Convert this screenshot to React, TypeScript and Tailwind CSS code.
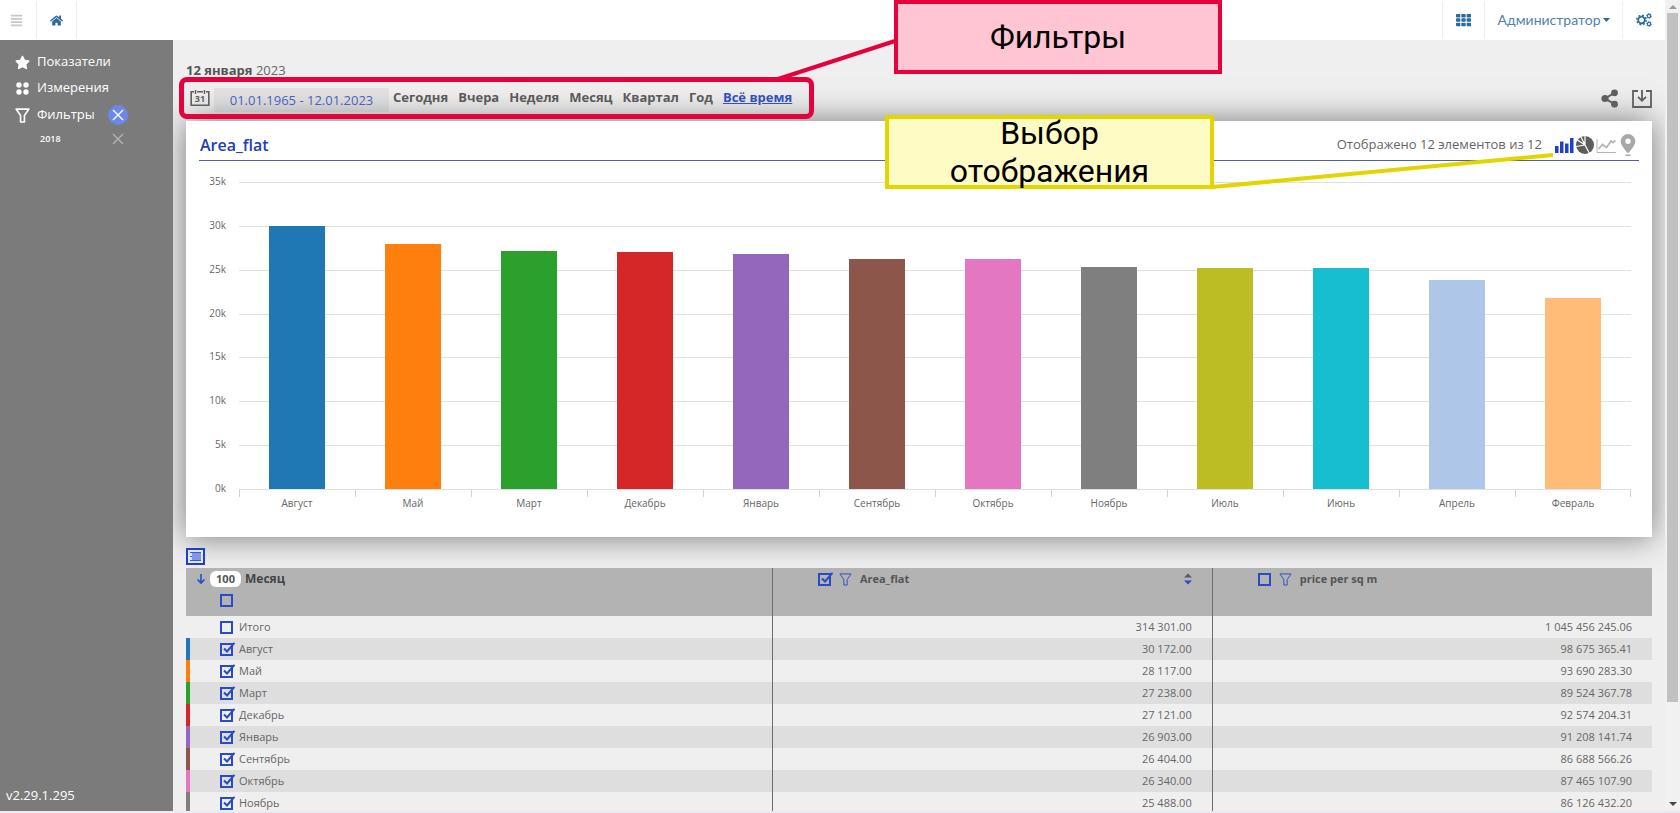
import { useState, type ReactNode } from "react";
import { FaAlignJustify, FaHome, FaStar, FaTh } from "react-icons/fa";

type Row = {
  name: string;
  color: string;
  value: number;
  area: string;
  price: string;
};

const rows: Row[] = [
  { name: "Август", color: "#1f77b4", value: 30172, area: "30 172.00", price: "98 675 365.41" },
  { name: "Май", color: "#ff7f0e", value: 28117, area: "28 117.00", price: "93 690 283.30" },
  { name: "Март", color: "#2ca02c", value: 27238, area: "27 238.00", price: "89 524 367.78" },
  { name: "Декабрь", color: "#d62728", value: 27121, area: "27 121.00", price: "92 574 204.31" },
  { name: "Январь", color: "#9467bd", value: 26903, area: "26 903.00", price: "91 208 141.74" },
  { name: "Сентябрь", color: "#8c564b", value: 26404, area: "26 404.00", price: "86 688 566.26" },
  { name: "Октябрь", color: "#e377c2", value: 26340, area: "26 340.00", price: "87 465 107.90" },
  { name: "Ноябрь", color: "#7f7f7f", value: 25488, area: "25 488.00", price: "86 126 432.20" },
];

const bars = [
  ...rows,
  { name: "Июль", color: "#bcbd22", value: 25300 },
  { name: "Июнь", color: "#17becf", value: 25290 },
  { name: "Апрель", color: "#aec7e8", value: 24000 },
  { name: "Февраль", color: "#ffbb78", value: 21900 },
];

const ticks = ["35k", "30k", "25k", "20k", "15k", "10k", "5k", "0k"];
const axisMax = 35200;
const periods = ["Сегодня", "Вчера", "Неделя", "Месяц", "Квартал", "Год", "Всё время"];

function FunnelIcon({ className }: { className: string }) {
  return (
    <svg viewBox="0 0 14 14" className={className} fill="none" stroke="currentColor" strokeLinejoin="round">
      <path d="M1 1h12L8.8 7v6H5.2V7z" />
    </svg>
  );
}

function CrossIcon() {
  return (
    <svg viewBox="0 0 12 12" className="size-3" fill="none" stroke="currentColor" strokeWidth="1.4">
      <path d="M1 1l10 10M11 1L1 11" />
    </svg>
  );
}

function CogsIcon() {
  return (
    <svg viewBox="0 0 16 14" className="h-[14px] w-4" fill="none" stroke="currentColor">
      <circle cx="5.500" cy="7" r="3.300" strokeWidth="1.800" />
      <circle cx="5.500" cy="7" r="4.700" strokeWidth="1.500" strokeDasharray="1.850 1.850" />
      <circle cx="13" cy="3" r="1.700" strokeWidth="1.200" />
      <circle cx="13" cy="3" r="2.500" strokeWidth=".8" strokeDasharray="1.300 1.300" />
      <circle cx="13" cy="11" r="1.700" strokeWidth="1.200" />
      <circle cx="13" cy="11" r="2.500" strokeWidth=".8" strokeDasharray="1.300 1.300" />
    </svg>
  );
}

function CalendarIcon() {
  return (
    <svg viewBox="0 0 20 18" className="h-[18px] w-5 shrink-0 text-[#5f5f5f]" fill="none" stroke="currentColor">
      <path d="M4 2.8H1.2v13.4h17.6V2.8H16" strokeWidth="1.6" />
      <path d="M5.5 1v4M14.5 1v4M7 2.800h6" strokeWidth="1.4" />
      <text x="10" y="13" textAnchor="middle" fontSize="9" fontWeight="700" fill="currentColor" stroke="none">
        31
      </text>
    </svg>
  );
}

function ShareIcon() {
  return (
    <svg viewBox="0 0 18 19" className="h-[19px] w-[18px]" fill="currentColor">
      <path d="M13.500 3.800L4 9.500l9.500 5.700" fill="none" stroke="currentColor" strokeWidth="2" />
      <circle cx="13.500" cy="3.800" r="3.400" />
      <circle cx="4" cy="9.500" r="3.600" />
      <circle cx="13.500" cy="15.200" r="3.400" />
    </svg>
  );
}

function DownloadIcon() {
  return (
    <svg viewBox="0 0 20 18" className="h-[18px] w-5" fill="none" stroke="currentColor" strokeWidth="1.800">
      <path d="M6 1H1v16h18V1h-5" />
      <path d="M10 0v10.500M6 6.800l4 4 4-4" />
    </svg>
  );
}

function BarsIcon() {
  return (
    <svg viewBox="0 0 20 18" className="h-[18px] w-5 text-[#1f3fc4]" fill="currentColor">
      <path d="M1 10h3.500v7H1zM6 5.500h3.500V17H6zM11 7.500h3.500V17H11zM16 2h3.500v15H16z" />
    </svg>
  );
}

function PieIcon() {
  return (
    <svg viewBox="0 0 18 18" className="size-[18px] text-[#5c5c5c]">
      <circle cx="9" cy="9" r="9" fill="currentColor" />
      <path d="M9 0v9L13.500 17.500M9 9L1.500 4M9 9L0 10.500M9 9L5 1" fill="none" stroke="#fff" strokeWidth="1.200" />
    </svg>
  );
}

function LineIcon() {
  return (
    <svg viewBox="0 0 20 18" className="h-[18px] w-5 text-[#b4b4b4]" fill="none" stroke="currentColor">
      <path d="M1 3v13.500h19" strokeWidth="1" />
      <path d="M2.500 13l4-4.500 4 3 4.500-6.500 2 1.500 2.500-2" strokeWidth="1.700" />
    </svg>
  );
}

function PinIcon() {
  return (
    <svg viewBox="0 0 16 22" className="h-[22px] w-4" fill="currentColor">
      <path
        fillRule="evenodd"
        d="M8 0a7.300 7.300 0 0 0-7.300 7.300C.700 12 8 19.500 8 19.500s7.300-7.500 7.300-12.200A7.300 7.300 0 0 0 8 0zm0 4.600a2.700 2.700 0 1 1 0 5.400 2.700 2.700 0 0 1 0-5.400z"
      />
      <path d="M5.500 20.500h5V22h-5z" />
    </svg>
  );
}

function Check({ label, initial = false, children }: { label: string; initial?: boolean; children?: ReactNode }) {
  const [checked, setChecked] = useState(initial);
  return (
    <label className="flex items-center gap-[6px]">
      <span className="relative block size-[13px] shrink-0">
        <input
          type="checkbox"
          aria-label={label}
          checked={checked}
          onChange={(e) => setChecked(e.target.checked)}
          className="block size-[13px] appearance-none border-2 border-[#2a4bc6]"
        />
        {checked ? (
          <svg viewBox="0 0 16 14" className="pointer-events-none absolute -top-px left-0 h-[14px] w-4">
            <path d="M4 6.500l3 3L14.500.800" fill="none" stroke="#2a4bc6" strokeWidth="2" />
          </svg>
        ) : null}
      </span>
      {children}
    </label>
  );
}

function TopBar() {
  return (
    <header className="flex h-10 shrink-0 items-center justify-between bg-white text-[#2c6c9c]">
      <div className="flex h-9 items-center">
        <button aria-label="Меню" className="flex h-full w-[37px] items-center justify-end border-r border-[#eee] pr-[13px] text-[#c8c8c8]">
          <FaAlignJustify className="size-[13px]" />
        </button>
        <a href="#" aria-label="Главная" className="flex h-full w-10 items-center justify-center border-r border-[#eee]">
          <FaHome className="size-[13px]" />
        </a>
      </div>
      <div className="flex h-9 items-center">
        <button aria-label="Приложения" className="flex h-full w-[42px] items-center justify-center border-l border-[#eee]">
          <FaTh className="h-[14px] w-[15px]" preserveAspectRatio="none" />
        </button>
        <button className="flex h-full w-[139px] items-center justify-center gap-[2px] border-x border-[#eee] font-['Lato','Open_Sans',sans-serif] text-sm text-[#4f83aa]">
          Администратор
          <svg viewBox="0 0 7 4" className="h-1 w-[7px]" fill="#2c6c9c">
            <path d="M0 0h7L3.500 4z" />
          </svg>
        </button>
        <button aria-label="Настройки" className="flex h-full w-[42px] items-center justify-center">
          <CogsIcon />
        </button>
      </div>
    </header>
  );
}

function Sidebar() {
  return (
    <aside className="relative z-10 flex w-[173px] shrink-0 flex-col justify-between bg-[#7b7b7b] text-[13px] text-white">
      <nav className="pt-[9px]">
        <a href="#" className="flex h-[26px] items-center gap-[7px] pl-[15px]">
          <FaStar className="size-[15px]" />
          Показатели
        </a>
        <a href="#" className="flex h-[26px] items-center gap-[7px] pl-[15px]">
          <svg viewBox="0 0 15 15" className="size-[15px]" fill="currentColor">
            <circle cx="4" cy="4" r="2.700" />
            <circle cx="11" cy="4" r="2.700" />
            <circle cx="4" cy="11" r="2.700" />
            <circle cx="11" cy="11" r="2.700" />
          </svg>
          Измерения
        </a>
        <div className="flex h-7 items-center gap-[7px] pl-[15px]">
          <FunnelIcon className="size-[15px] stroke-[1.5]" />
          <a href="#" className="w-[64px]">Фильтры</a>
          <button aria-label="Сбросить фильтры" className="flex size-5 items-center justify-center rounded-full bg-[#6b87e8]">
            <CrossIcon />
          </button>
        </div>
        <div className="flex h-5 items-center pl-10 text-[9px] font-semibold">
          <span className="w-[72px]">2018</span>
          <button aria-label="Удалить 2018" className="text-[#b4b4b4]">
            <CrossIcon />
          </button>
        </div>
      </nav>
      <div className="pb-[6px] pl-[6px]">v2.29.1.295</div>
    </aside>
  );
}

function Toolbar() {
  const [range, setRange] = useState("01.01.1965 - 12.01.2023");
  const [active, setActive] = useState("Всё время");

  return (
    <div className="flex items-center justify-between pl-1">
      <div className="flex h-9 items-center">
        <CalendarIcon />
        <input
          aria-label="Период"
          value={range}
          onChange={(e) => setRange(e.target.value)}
          className="ml-1 mt-1 h-6 w-[175px] bg-black/5 text-center text-[13px] text-[#4a5fc4]"
        />
        <div className="ml-1 flex gap-[10px] text-[13px] font-bold">
          {periods.map((p) => (
            <button key={p} onClick={() => setActive(p)} className={p === active ? "text-[#3350bd] underline" : "text-[#5a5a5a]"}>
              {p}
            </button>
          ))}
        </div>
      </div>
      <div className="flex items-center gap-[13px] pt-px text-[#5f5f5f]">
        <button aria-label="Поделиться">
          <ShareIcon />
        </button>
        <button aria-label="Скачать">
          <DownloadIcon />
        </button>
      </div>
    </div>
  );
}

function ChartCard() {
  return (
    <section className="h-[416px] bg-white px-[13px] pt-2 shadow-[0_0_30px_rgba(0,0,0,0.5)]">
      <div className="flex h-8 items-center justify-between border-b border-[#4d619c]">
        <h2 className="pl-px text-base font-semibold text-[#2340b0]">Area_flat</h2>
        <div className="flex items-center gap-[2px] pr-px text-[#a8a8a8]">
          <span className="mr-[10px] text-[13px] text-[#666]">Отображено 12 элементов из 12</span>
          <button aria-label="Столбцы"><BarsIcon /></button>
          <button aria-label="Круговая"><PieIcon /></button>
          <button aria-label="График"><LineIcon /></button>
          <button aria-label="Карта" className="px-[2px]"><PinIcon /></button>
        </div>
      </div>
      <div className="mt-[21px] flex pr-2 text-[10px] leading-3 text-[#666]">
        <div className="-mt-[7px] flex h-[319px] w-10 flex-col justify-between pr-[13px] text-right">
          {ticks.map((t) => (
            <span key={t}>{t}</span>
          ))}
        </div>
        <div className="relative flex-1">
          <div className="absolute inset-x-0 top-0 flex h-[308px] flex-col justify-between">
            {ticks.map((t) => (
              <div key={t} className="h-px bg-[#e0e0e0]" />
            ))}
          </div>
          <div className="relative flex h-[307px] items-end">
            {bars.map((b) => (
              <div key={b.name} className="flex h-full flex-1 items-end justify-center">
                <div className="w-[48%]" style={{ height: `${(b.value / axisMax) * 100}%`, backgroundColor: b.color }} />
              </div>
            ))}
          </div>
          <div className="flex">
            {bars.map((b) => (
              <div key={b.name} className="group flex-1 text-center">
                <div className="h-2 border-l border-[#ccd3de] group-last:border-r" />
                {b.name}
              </div>
            ))}
          </div>
        </div>
      </div>
    </section>
  );
}

function DataTable() {
  const [limit, setLimit] = useState("100");

  return (
    <table className="w-full table-fixed border-collapse text-[11px] text-[#666]">
      <colgroup>
        <col className="w-[40%]" />
        <col className="w-[30%]" />
        <col className="w-[30%]" />
      </colgroup>
      <thead>
        <tr className="h-12 bg-[#b3b3b3] text-left align-top text-[#555]">
          <th className="p-0">
            <div className="flex h-[22px] items-center pl-[10px]">
              <svg viewBox="0 0 10 12" className="mr-1 h-3 w-[10px]" fill="none" stroke="#2a4bc6" strokeWidth="1.600">
                <path d="M5 1v9M1.500 6.500L5 10l3.500-3.500" />
              </svg>
              <input
                aria-label="Количество строк"
                value={limit}
                onChange={(e) => setLimit(e.target.value)}
                className="h-4 w-[31px] rounded-md bg-white text-center font-bold text-[#555]"
              />
              <span className="ml-1 text-xs text-[#444]">Месяц</span>
            </div>
            <div className="flex h-5 items-center pl-[34px]">
              <Check label="Выбрать все" />
            </div>
          </th>
          <th className="border-l border-[#6d6d6d] p-0">
            <div className="flex h-[22px] items-center gap-2 pl-[45px] pr-5">
              <Check label="Area_flat" initial />
              <FunnelIcon className="size-[13px] text-[#2a4bc6]" />
              <span>Area_flat</span>
              <button aria-label="Сортировать" className="ml-auto">
                <svg viewBox="0 0 8 12" className="h-3 w-2">
                  <path d="M0 4.500L4 .500l4 4z" fill="#5b5b5b" />
                  <path d="M0 7.500l4 4 4-4z" fill="#2a4bc6" />
                </svg>
              </button>
            </div>
          </th>
          <th className="border-l border-[#6d6d6d] p-0">
            <div className="flex h-[22px] items-center gap-2 pl-[45px] pr-5">
              <Check label="price per sq m" />
              <FunnelIcon className="size-[13px] text-[#2a4bc6]" />
              <span>price per sq m</span>
            </div>
          </th>
        </tr>
      </thead>
      <tbody>
        <tr className="h-[22px]">
          <td className="p-0 pl-[34px]">
            <Check label="Итого">Итого</Check>
          </td>
          <td className="border-l border-[#6d6d6d] p-0 pr-5 text-right">314 301.00</td>
          <td className="border-l border-[#6d6d6d] p-0 pr-5 text-right">1 045 456 245.06</td>
        </tr>
        {rows.map((r) => (
          <tr key={r.name} className="h-[22px] odd:bg-[#efefef] even:bg-[#dedede]">
            <td className="p-0">
              <div className="flex h-[22px] items-center gap-[30px]">
                <span className="h-full w-1" style={{ backgroundColor: r.color }} />
                <Check label={r.name} initial>
                  {r.name}
                </Check>
              </div>
            </td>
            <td className="border-l border-[#6d6d6d] p-0 pr-5 text-right">{r.area}</td>
            <td className="border-l border-[#6d6d6d] p-0 pr-5 text-right">{r.price}</td>
          </tr>
        ))}
      </tbody>
    </table>
  );
}

function Scrollbar() {
  return (
    <div className="flex w-[15px] shrink-0 flex-col items-center bg-[#f1f1f1] py-1">
      <svg viewBox="0 0 8 5" className="h-[5px] w-2">
        <path d="M0 5l4-4 4 4z" fill="#999" />
      </svg>
      <div className="mt-1 w-[11px] grow-[689] bg-[#c1c1c1]" />
      <div className="grow-[100]" />
      <svg viewBox="0 0 8 5" className="h-[5px] w-2">
        <path d="M0 0l4 4 4-4z" fill="#444" />
      </svg>
    </div>
  );
}

// Callouts lie over the page and point at the filter row and the view switch
function Callouts() {
  return (
    <div className="pointer-events-none absolute inset-0 z-20 font-['Roboto','Open_Sans',sans-serif] text-[32px] leading-[38px] text-black">
      <svg className="absolute inset-0 size-full" fill="none" strokeWidth="4">
        <path d="M775 80L898 40" stroke="#e6003c" />
        <path d="M1212 187L1553 155" stroke="#e2d500" />
      </svg>
      <div className="absolute left-[179px] top-[77px] h-[42px] w-[635px] rounded-lg border-[5px] border-[#e6003c]" />
      <div className="absolute left-[894px] top-0 flex h-[74px] w-[328px] items-center justify-center border-4 border-[#e6003c] bg-[#ffc5d3]">
        Фильтры
      </div>
      <div className="absolute left-[885px] top-[115px] flex h-[74px] w-[329px] items-center justify-center border-4 border-[#e2d500] bg-[#fffbc4] text-center">
        Выбор
        <br />
        отображения
      </div>
    </div>
  );
}

export default function App() {
  return (
    <div className="relative flex h-screen flex-col overflow-hidden bg-[#efefef] font-['Open_Sans','Noto_Sans',sans-serif]">
      <div className="flex min-h-0 flex-1">
        <div className="flex min-w-0 flex-1 flex-col">
          <TopBar />
          <div className="flex min-h-0 flex-1">
            <Sidebar />
            <main className="min-w-0 flex-1 overflow-hidden px-[13px] pt-5">
              <div className="h-5 text-[13px] leading-5 text-[#666]">
                <b className="text-[#555]">12 января</b> 2023
              </div>
              <Toolbar />
              <div className="mt-[5px]">
                <ChartCard />
              </div>
              <button aria-label="Вид таблицы" className="mb-[3px] mt-[11px] flex h-[17px] w-[19px] items-center justify-center border-2 border-[#1f3fc4] bg-[#dfe5fb]">
                <svg viewBox="0 0 13 11" className="h-[11px] w-[13px]">
                  <path d="M3 1h9v9H3z" fill="#8296e6" />
                  <path d="M1 1.500h11M1 9.500h11M1 5.500h2" stroke="#3f5bd0" />
                </svg>
              </button>
              <DataTable />
            </main>
          </div>
        </div>
        <Scrollbar />
      </div>
      <div className="h-[2px] shrink-0 bg-[#e6ecf5]" />
      <Callouts />
    </div>
  );
}
